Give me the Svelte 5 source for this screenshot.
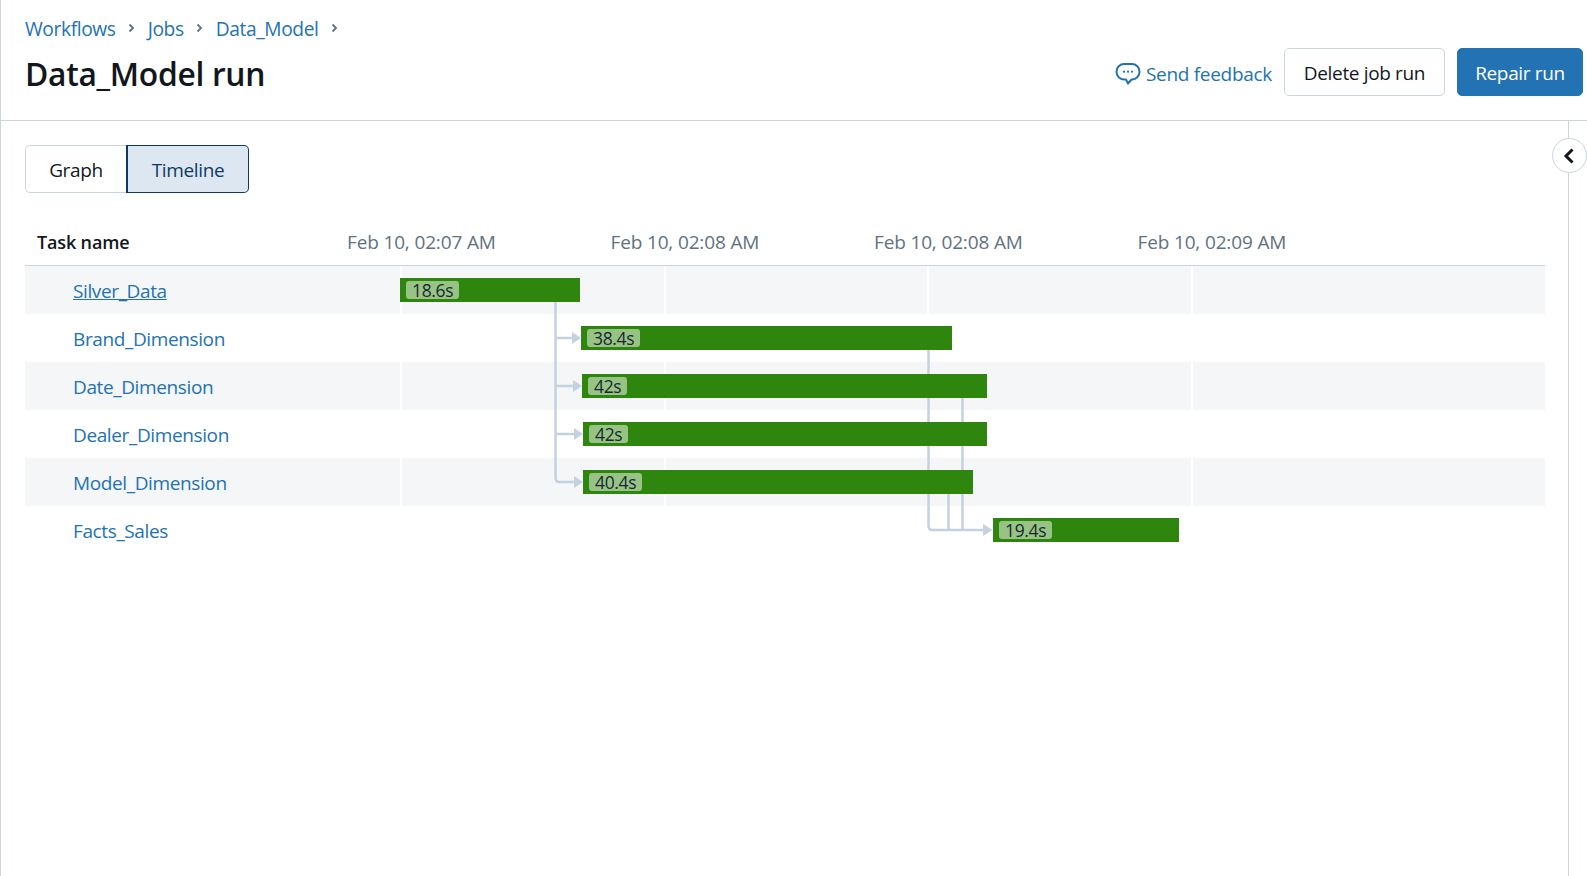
<script>
	const ticks = ['Feb 10, 02:07 AM', 'Feb 10, 02:08 AM', 'Feb 10, 02:08 AM', 'Feb 10, 02:09 AM'];

	// left/right are pixels on the page, the chart starts at x=25
	const tasks = [
		{ name: 'Silver_Data', time: '18.6s', left: 400, right: 580, active: true },
		{ name: 'Brand_Dimension', time: '38.4s', left: 581, right: 952 },
		{ name: 'Date_Dimension', time: '42s', left: 582, right: 987 },
		{ name: 'Dealer_Dimension', time: '42s', left: 583, right: 987 },
		{ name: 'Model_Dimension', time: '40.4s', left: 583, right: 973 },
		{ name: 'Facts_Sales', time: '19.4s', left: 993, right: 1179 }
	];

	const chartLeft = 25;
	const chartTop = 266;
	const rowHeight = 48;
	const gridLines = [400, 663.5, 927, 1191];

	const x = (v) => v - chartLeft;
	const y = (v) => v - chartTop;

	const branches = [338, 386, 434, 482];
</script>

<div class="page">
	<header class="top">
		<div class="titles">
			<nav class="crumbs">
				<a href="#w">Workflows</a>
				<svg class="sep" viewBox="0 0 9 12" width="9" height="12"><path d="M2.500 2.500 6 6 2.500 9.500" /></svg>
				<a href="#j">Jobs</a>
				<svg class="sep" viewBox="0 0 9 12" width="9" height="12"><path d="M2.500 2.500 6 6 2.500 9.500" /></svg>
				<a href="#d">Data_Model</a>
				<svg class="sep" viewBox="0 0 9 12" width="9" height="12"><path d="M2.500 2.500 6 6 2.500 9.500" /></svg>
			</nav>
			<h1>Data_Model run</h1>
		</div>
		<div class="actions">
			<a class="feedback" href="#f">
				<svg viewBox="0 0 26 24" width="26" height="24">
					<path class="bubble" d="M9 2h8a7.500 7.500 0 0 1 7.500 7.500v.5a7.500 7.500 0 0 1-7.500 7.500h-.5l-3.500 4-2-4H9A7.500 7.500 0 0 1 1.500 10v-.5A7.500 7.500 0 0 1 9 2Z" />
					<circle cx="9" cy="9.700" r="1.100" />
					<circle cx="13" cy="9.700" r="1.100" />
					<circle cx="17" cy="9.700" r="1.100" />
				</svg>
				<span>Send feedback</span>
			</a>
			<button class="btn delete">Delete job run</button>
			<button class="btn primary">Repair run</button>
		</div>
	</header>

	<div class="body">
		<main>
			<div class="tabs">
				<button class="tab">Graph</button>
				<button class="tab on">Timeline</button>
			</div>

			<div class="table">
				<div class="head">
					<div class="name-col">Task name</div>
					{#each ticks as t}
						<div class="tick">{t}</div>
					{/each}
				</div>
				<div class="rows">
					{#each tasks as task}
						<div class="row">
							<a class="task" class:active={task.active} href="#t">{task.name}</a>
							<div class="bar" style="left:{x(task.left)}px;width:{task.right - task.left}px">
								<span class="time">{task.time}</span>
							</div>
						</div>
					{/each}
					{#each gridLines as g}
						<div class="grid" style="left:{x(g)}px"></div>
					{/each}
					<svg class="links" width="1522" height={rowHeight * tasks.length}>
						<path d="M{x(555.5)} {y(302)}V{y(478)}q0 4 4 4H{x(575)}" />
						{#each branches.slice(0, 3) as b}
							<path d="M{x(555.5)} {y(b)}H{x(575)}" />
						{/each}
						<path d="M{x(928.5)} {y(350)}V{y(526)}q0 4 4 4H{x(984)}" />
						<path d="M{x(948.5)} {y(494)}V{y(530)}" />
						<path d="M{x(962.5)} {y(398)}V{y(530)}" />
						{#each tasks.slice(1, 5) as t, i}
							<polygon points="{x(t.left - 9)},{y(branches[i] - 6)} {x(t.left)},{y(branches[i])} {x(t.left - 9)},{y(branches[i] + 6)}" />
						{/each}
						<polygon points="{x(983)},{y(524)} {x(992.5)},{y(530)} {x(983)},{y(536)}" />
					</svg>
				</div>
			</div>
		</main>
		<aside>
			<button class="toggle" aria-label="Collapse">
				<svg viewBox="0 0 14 18" width="14" height="18"><path d="M10.500 2.500 4 9l6.500 6.500" /></svg>
			</button>
		</aside>
	</div>
</div>

<style>
	:global(body) {
		background: #fff;
		overflow: hidden;
	}
	.page {
		height: 876px;
		border-left: 1px solid #cbd5e1;
		box-sizing: border-box;
		display: flex;
		flex-direction: column;
		font-family: 'Open Sans', 'Noto Sans', sans-serif;
		color: #11171c;
		font-size: 18px;
		letter-spacing: -0.15px;
	}
	a {
		color: #2272b4;
		text-decoration: none;
	}
	button {
		font: inherit;
		letter-spacing: inherit;
		cursor: pointer;
	}
	.top {
		height: 121px;
		box-sizing: border-box;
		border-bottom: 1px solid #cbd5e1;
		display: flex;
		justify-content: space-between;
		padding: 0 4px 0 24px;
	}
	.crumbs {
		display: flex;
		align-items: center;
		gap: 11.5px;
		height: 24px;
		margin-top: 16px;
		font-size: 19.2px;
		letter-spacing: -0.38px;
	}
	.sep {
		fill: none;
		stroke: #5f7281;
		stroke-width: 1.8;
	}
	h1 {
		margin: 14px 0 0;
		font-size: 31.8px;
		line-height: 40px;
		font-weight: 600;
		letter-spacing: -0.3px;
	}
	.actions {
		display: flex;
		align-items: flex-start;
		gap: 12px;
		padding-top: 48px;
		box-sizing: border-box;
	}
	.feedback {
		display: flex;
		align-items: center;
		gap: 5px;
		height: 48px;
		font-size: 19px;
		letter-spacing: -0.3px;
	}
	.feedback span {
		padding-top: 3px;
	}
	.feedback svg {
		fill: #2272b4;
		margin-top: 4px;
	}
	.bubble {
		fill: none;
		stroke: #2272b4;
		stroke-width: 2;
		stroke-linejoin: round;
	}
	.btn {
		height: 48px;
		width: 126px;
		padding: 2px 0 0;
		background: #fff;
		border: 1px solid #cbd5e1;
		border-radius: 5px;
		color: #11171c;
		font-size: 19px;
		letter-spacing: -0.35px;
	}
	.delete {
		width: 161px;
	}
	.primary {
		background: #2272b4;
		border-color: #2272b4;
		color: #fff;
	}
	.body {
		flex: 1;
		display: flex;
		min-height: 0;
	}
	main {
		flex: 1;
		padding: 24px 23px 0 24px;
		min-width: 0;
	}
	aside {
		width: 18px;
		border-left: 1px solid #cbd5e1;
		position: relative;
	}
	.toggle {
		position: absolute;
		left: -17px;
		top: 17px;
		width: 35px;
		height: 35px;
		border-radius: 50%;
		border: 1px solid #cbd5e1;
		background: #fff;
		padding: 0 2px 0 0;
		display: flex;
		align-items: center;
		justify-content: center;
	}
	.toggle svg {
		fill: none;
		stroke: #11171c;
		stroke-width: 3;
	}
	.tabs {
		display: flex;
	}
	.tab {
		height: 48px;
		width: 101px;
		padding: 2px 0 0;
		background: #fff;
		border: 1px solid #cbd5e1;
		border-right: 0;
		border-radius: 5px 0 0 5px;
		color: #11171c;
		font-size: 19px;
		letter-spacing: -0.35px;
	}
	.tab.on {
		width: 123px;
		background: #dce7f2;
		border: 1px solid #0e3a62;
		border-left-width: 2px;
		border-radius: 0 5px 5px 0;
		color: #0e3a62;
	}
	.table {
		margin-top: 24px;
	}
	.head {
		height: 49px;
		box-sizing: border-box;
		display: flex;
		align-items: center;
		padding-top: 2px;
		border-bottom: 1px solid #cbd5e1;
	}
	.name-col {
		width: 322px;
		padding-left: 12px;
		box-sizing: border-box;
		font-weight: 600;
	}
	.tick {
		width: 263.5px;
		color: #5f7281;
		font-size: 19px;
	}
	.rows {
		position: relative;
	}
	.row {
		height: 48px;
		display: flex;
		align-items: center;
		padding-left: 48px;
		font-size: 19px;
		letter-spacing: -0.38px;
	}
	.task {
		padding-top: 2px;
	}
	.row:nth-child(odd) {
		background: #f5f6f8;
	}
	.task.active {
		text-decoration: underline;
	}
	.grid {
		position: absolute;
		top: 0;
		height: 240px;
		width: 2px;
		background: #fff;
	}
	.bar {
		position: absolute;
		height: 24px;
		background: #2f860f;
		z-index: 3;
		display: flex;
		align-items: center;
		padding-left: 6px;
		box-sizing: border-box;
	}
	.time {
		background: #97c485;
		color: #1a2733;
		font-size: 17.5px;
		line-height: 18px;
		padding: 0 6px;
		border-radius: 3px;
		letter-spacing: -0.35px;
	}
	.links {
		position: absolute;
		left: 0;
		top: 0;
		z-index: 2;
	}
	.links path {
		fill: none;
		stroke: #c4d1de;
		stroke-width: 2.5;
	}
	.links polygon {
		fill: #c4d1de;
	}
</style>
